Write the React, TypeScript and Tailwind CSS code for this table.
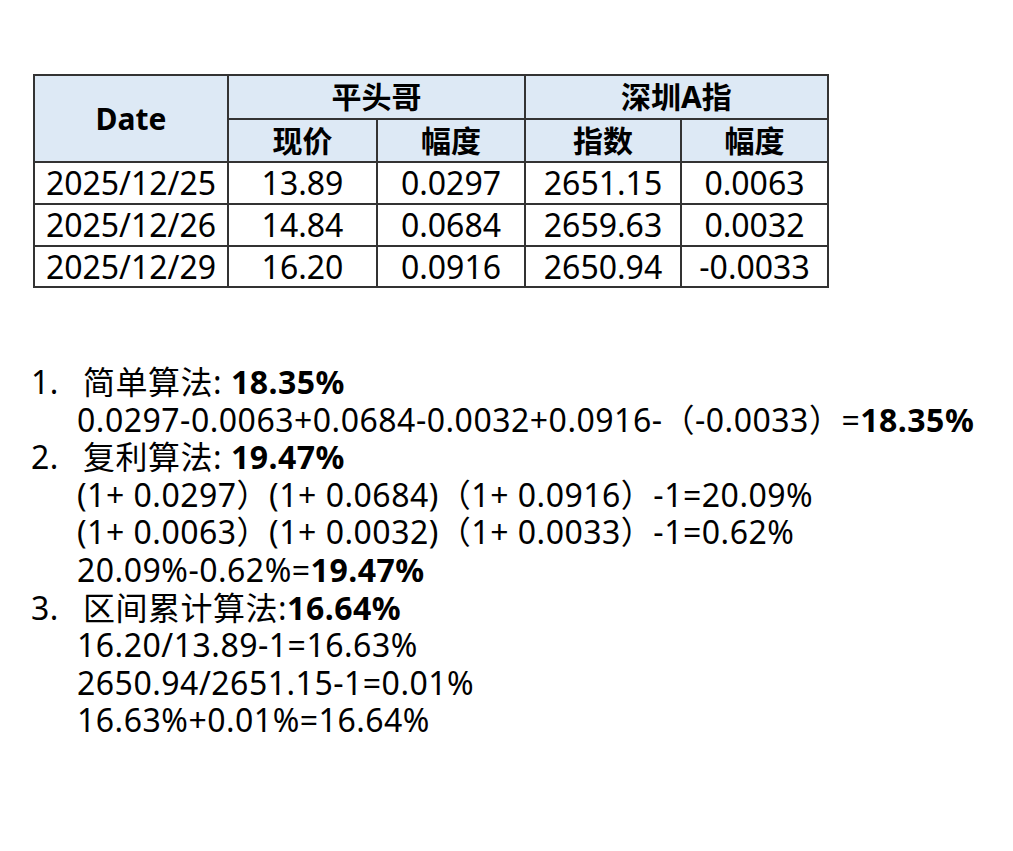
const font = { fontFamily: '"Noto Sans", "Noto Sans CJK SC", sans-serif' };

const rows = [
  ['2025/12/25', '13.89', '0.0297', '2651.15', '0.0063'],
  ['2025/12/26', '14.84', '0.0684', '2659.63', '0.0032'],
  ['2025/12/29', '16.20', '0.0916', '2650.94', '-0.0033'],
];

const th = 'border-2 border-[#333] bg-[#dde9f5] text-center font-bold text-[30px] leading-none p-0';
const td = 'border-2 border-[#333] text-center text-[32px] leading-none p-0';

const Item = ({ n, title, value, lines }: { n: string; title: string; value: string; lines: React.ReactNode[] }) => (
  <div className="flex">
    <div className="w-[46px] shrink-0">{n}</div>
    <div className="flex flex-col">
      <div className="pl-[6px]">
        {title}
        <span className="font-bold">{value}</span>
      </div>
      {lines.map((l, i) => (
        <div key={i}>{l}</div>
      ))}
    </div>
  </div>
);

export default function App() {
  return (
    <div className="w-[1013px] h-[851px] bg-white text-black pt-[74px] pl-[33px]" style={font}>
      <table className="border-collapse">
        <colgroup>
          <col className="w-[194px]" />
          <col className="w-[149px]" />
          <col className="w-[148px]" />
          <col className="w-[156px]" />
          <col className="w-[147px]" />
        </colgroup>
        <thead>
          <tr className="h-[44px]">
            <th rowSpan={2} className={th}>Date</th>
            <th colSpan={2} className={th}>平头哥</th>
            <th colSpan={2} className={th}>深圳A指</th>
          </tr>
          <tr className="h-[43px]">
            <th className={th}>现价</th>
            <th className={th}>幅度</th>
            <th className={th}>指数</th>
            <th className={th}>幅度</th>
          </tr>
        </thead>
        <tbody>
          {rows.map((r, i) => (
            <tr key={i} className={i === 2 ? 'h-[41px]' : 'h-[42px]'}>
              {r.map((c, j) => (
                <td key={j} className={td}>{c}</td>
              ))}
            </tr>
          ))}
        </tbody>
      </table>

      <div className="mt-[75px] -ml-[2px] text-[32px] leading-[37.6px] tracking-[0.5px]">
        <Item
          n="1."
          title="简单算法: "
          value="18.35%"
          lines={[
            <>
              0.0297-0.0063+0.0684-0.0032+0.0916-（-0.0033）=<span className="font-bold">18.35%</span>
            </>,
          ]}
        />
        <Item
          n="2."
          title="复利算法: "
          value="19.47%"
          lines={[
            '(1+ 0.0297）(1+ 0.0684)（1+ 0.0916）-1=20.09%',
            '(1+ 0.0063）(1+ 0.0032)（1+ 0.0033）-1=0.62%',
            <>
              20.09%-0.62%=<span className="font-bold">19.47%</span>
            </>,
          ]}
        />
        <Item
          n="3."
          title="区间累计算法:"
          value="16.64%"
          lines={['16.20/13.89-1=16.63%', '2650.94/2651.15-1=0.01%', '16.63%+0.01%=16.64%']}
        />
      </div>
    </div>
  );
}
